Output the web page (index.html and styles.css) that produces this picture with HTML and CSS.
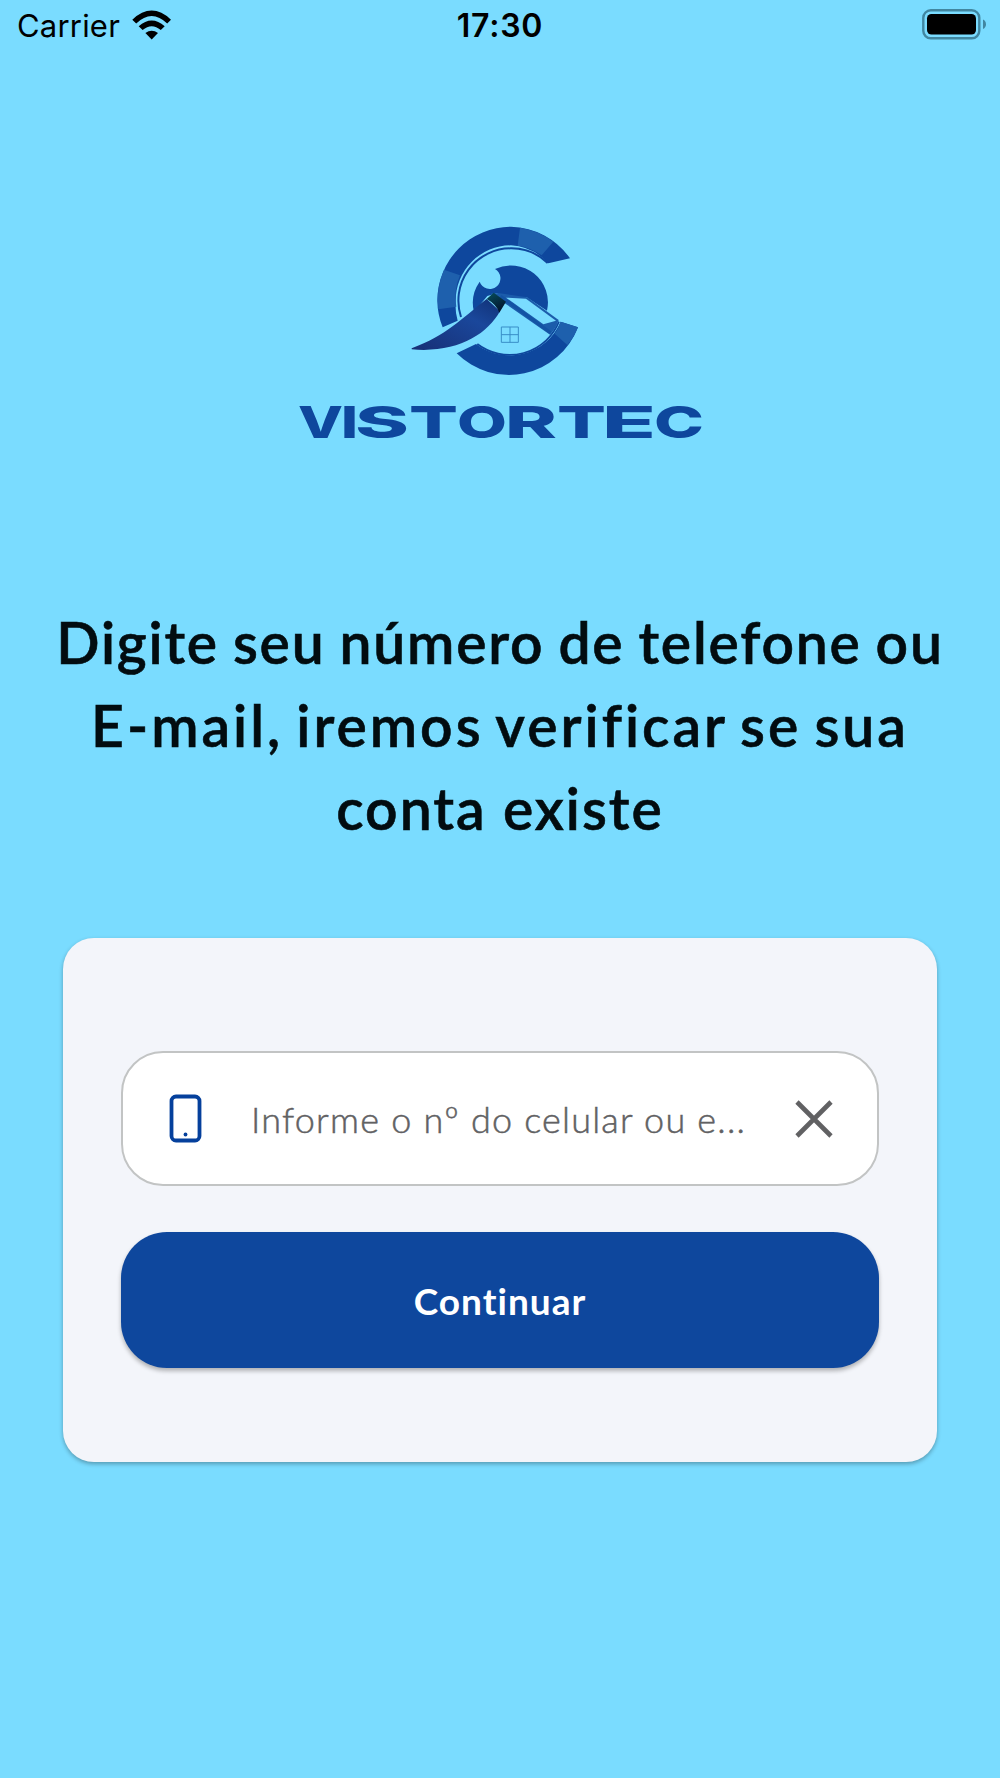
FILE: index.html
```html
<!DOCTYPE html>
<html lang="pt-BR">
<head>
  <meta charset="UTF-8">
  <meta name="viewport" content="width=device-width, initial-scale=1.0">
  <title>Vistortec</title>
  <link rel="stylesheet" href="styles.css">
</head>
<body>
  <!-- Status bar -->
  <header class="status-bar">
    <div class="carrier">
      <span>Carrier</span>
      <svg class="wifi" viewBox="0 0 40 30">
        <path d="M0.3 9.7Q19.7 -8.5 39 9.7L35.2 13.6Q19.7 -1.5 4.2 13.6Z"/>
        <path d="M6.7 16.2Q19.7 4.6 32.7 16.2L28.8 20Q19.7 12.3 10.6 20Z"/>
        <path d="M13.4 23Q19.7 18.3 26 23L19.7 29.4Z"/>
      </svg>
    </div>
    <div class="time">17:30</div>
    <svg class="battery" viewBox="0 0 64 32">
      <rect x="1.3" y="1.3" width="56" height="28" rx="7.5" fill="none" stroke="#4186a0" stroke-width="2.4"/>
      <rect x="5" y="5" width="49" height="20.6" rx="4.5"/>
      <path d="M61 10.5Q64 12 64 15.3Q64 18.6 61 20Z" fill="#4186a0"/>
    </svg>
  </header>

  <main>
    <svg class="logo" viewBox="0 0 420 230" role="img" aria-label="Vistortec">
      <defs>
        <linearGradient id="tail" x1="0" y1="1" x2="1" y2="0">
          <stop offset="0" stop-color="#172f75"/>
          <stop offset="0.65" stop-color="#1a479b"/>
          <stop offset="1" stop-color="#103075"/>
        </linearGradient>
        <linearGradient id="ferrule" x1="0" y1="0" x2="0.5" y2="1">
          <stop offset="0" stop-color="#06505f"/>
          <stop offset="1" stop-color="#03152e"/>
        </linearGradient>
      </defs>
      <g transform="translate(110 0) scale(0.33333)" fill="#0e479d">
        <!-- ring -->
        <path d="M510 145A222 222 0 0 0 333 50A222 222 0 0 0 112 273A222 222 0 0 0 128 352L173 332A166 166 0 0 1 167 273A166 166 0 0 1 333 106A166 166 0 0 1 445 160Z"/>
        <path d="M534 352A222 222 0 0 1 170 430L228 402A166 166 0 0 0 482 335Z"/>
        <g fill="#1e60ad">
          <path d="M360 53A222 222 0 0 1 460 95L425 136A166 166 0 0 0 353 107Z"/>
          <path d="M132 179A222 222 0 0 0 115 298L169 290A166 166 0 0 1 180 196Z"/>
          <path d="M534 352Q523 381 502 405L464 371Q476 354 482 335Z"/>
        </g>
        <path d="M443 159A157 157 0 0 0 333 115A157 157 0 0 0 183 321" fill="none" stroke="#0e479d" stroke-width="6"/>
        <path d="M232 402A160 160 0 0 0 477 335" fill="none" stroke="#0e479d" stroke-width="5"/>
        <!-- eye -->
        <path d="M285 177A111 111 0 0 1 441 302L380 262L315 260L290 250L262 258L222 306A111 111 0 0 1 239 215A32 32 0 1 0 285 177Z"/>
        <!-- roof -->
        <path d="M272 250L300 250L382 262L476 330Q470 352 450 374L312 278Z" fill="#1b5cab"/>
        <path d="M318 263L378 266L468 332L430 343Z" fill="#7adcff"/>
        <path d="M302 259L452 368" fill="none" stroke="#1353a4" stroke-width="9"/>
        <!-- brush -->
        <path d="M35 415C140 375 180 330 260 267L300 304C260 375 170 430 35 418Z" fill="url(#tail)"/>
        <path d="M260 267L281 248L318 275L298 308Q288 282 260 267Z" fill="url(#ferrule)"/>
        <!-- window -->
        <path d="M304 351H355V397H304ZM330 351V397M304 374H355" fill="none" stroke="#388ec7" stroke-width="3"/>
      </g>
      <text class="wordmark" y="228"><tspan x="8" textLength="45" lengthAdjust="spacingAndGlyphs">V</tspan><tspan x="51" textLength="17" lengthAdjust="spacingAndGlyphs">I</tspan><tspan x="65" textLength="54" lengthAdjust="spacingAndGlyphs">S</tspan><tspan x="119" textLength="49" lengthAdjust="spacingAndGlyphs">T</tspan><tspan x="167" textLength="50" lengthAdjust="spacingAndGlyphs">O</tspan><tspan x="215" textLength="52" lengthAdjust="spacingAndGlyphs">R</tspan><tspan x="267" textLength="49" lengthAdjust="spacingAndGlyphs">T</tspan><tspan x="312" textLength="54" lengthAdjust="spacingAndGlyphs">E</tspan><tspan x="364" textLength="50" lengthAdjust="spacingAndGlyphs">C</tspan></text>
    </svg>

    <h1>
      <span class="line-1">Digite seu número de telefone ou</span>
      <span class="line-2">E-mail, iremos verificar se sua</span>
      <span class="line-3">conta existe</span>
    </h1>

    <section class="card">
      <div class="field">
        <svg class="phone" viewBox="0 0 34 50">
          <rect x="2.5" y="2.5" width="28" height="44" rx="4.5" fill="none" stroke="#05409c" stroke-width="3.8"/>
          <circle cx="16.5" cy="40.5" r="1.9" fill="#05409c"/>
        </svg>
        <span class="placeholder">Informe o nº do celular ou e...</span>
        <svg class="clear" viewBox="0 0 38 38">
          <path d="M2 2L36 36M36 2L2 36" fill="none" stroke="#616163" stroke-width="4.6"/>
        </svg>
      </div>
      <button class="continue" type="button">Continuar</button>
    </section>
  </main>
</body>
</html>
```
FILE: styles.css
```css
* {
  box-sizing: border-box;
}

body {
  margin: 0;
  min-height: 1778px;
  background: #7adcff;
  color: #020c10;
  font-family: Lato, "Liberation Sans", sans-serif;
}

/* Status bar */
.status-bar {
  display: grid;
  grid-template-columns: 1fr auto 1fr;
  align-items: center;
  height: 52px;
  padding: 0 14px 2px 17px;
  font-family: Inter, sans-serif;
  font-size: 31px;
  color: #000;
}

.carrier {
  display: flex;
  align-items: center;
  gap: 12px;
  letter-spacing: 0.2px;
}

.wifi {
  width: 40px;
  height: 30px;
}

.time {
  font-size: 32px;
  font-weight: 600;
  letter-spacing: 0.8px;
  margin-left: -3px;
}

.battery {
  justify-self: end;
  width: 64px;
  height: 32px;
}

main {
  display: flex;
  flex-direction: column;
  align-items: center;
}

/* Logo */
.logo {
  width: 420px;
  height: 230px;
  margin-top: 158px;
  overflow: visible;
}

.wordmark {
  font-family: Inter, sans-serif;
  font-size: 44px;
  font-weight: 800;
  fill: #0e479d;
}

h1 {
  margin: 161px 0 0;
  font-size: 57px;
  font-weight: 600;
  line-height: 83px;
  text-align: center;
  white-space: nowrap;
  -webkit-text-stroke: 0.6px #020c10;
}

h1 span {
  display: block;
}

.line-1 {
  letter-spacing: 1.8px;
  word-spacing: -2px;
}

.line-2 {
  letter-spacing: 3px;
  word-spacing: -4px;
}

.line-3 {
  letter-spacing: 2px;
}

/* Form card */
.card {
  display: flex;
  flex-direction: column;
  gap: 46px;
  width: 874px;
  height: 524px;
  margin-top: 88px;
  padding: 113px 58px 0;
  border-radius: 31px;
  background: #f3f5fa;
  box-shadow: 0 2px 4px rgba(0, 0, 0, 0.3);
}

.field {
  display: flex;
  align-items: center;
  height: 135px;
  padding: 0 44px 0 46px;
  border: 2px solid #c2c4c4;
  border-radius: 42px;
  background: #fff;
}

.phone {
  width: 34px;
  height: 50px;
}

.placeholder {
  flex: 1;
  margin-left: 48px;
  font-size: 36px;
  font-weight: 300;
  letter-spacing: 1.2px;
  white-space: nowrap;
  color: #616163;
  -webkit-text-stroke: 0.5px #616163;
}

.clear {
  width: 38px;
  height: 38px;
}

.continue {
  height: 136px;
  padding: 0;
  border: none;
  border-radius: 46px;
  background: #0e479d;
  box-shadow: 0 3px 4px rgba(0, 0, 0, 0.28);
  color: #fff;
  font: 700 37px Lato, sans-serif;
  letter-spacing: 1px;
}
```
